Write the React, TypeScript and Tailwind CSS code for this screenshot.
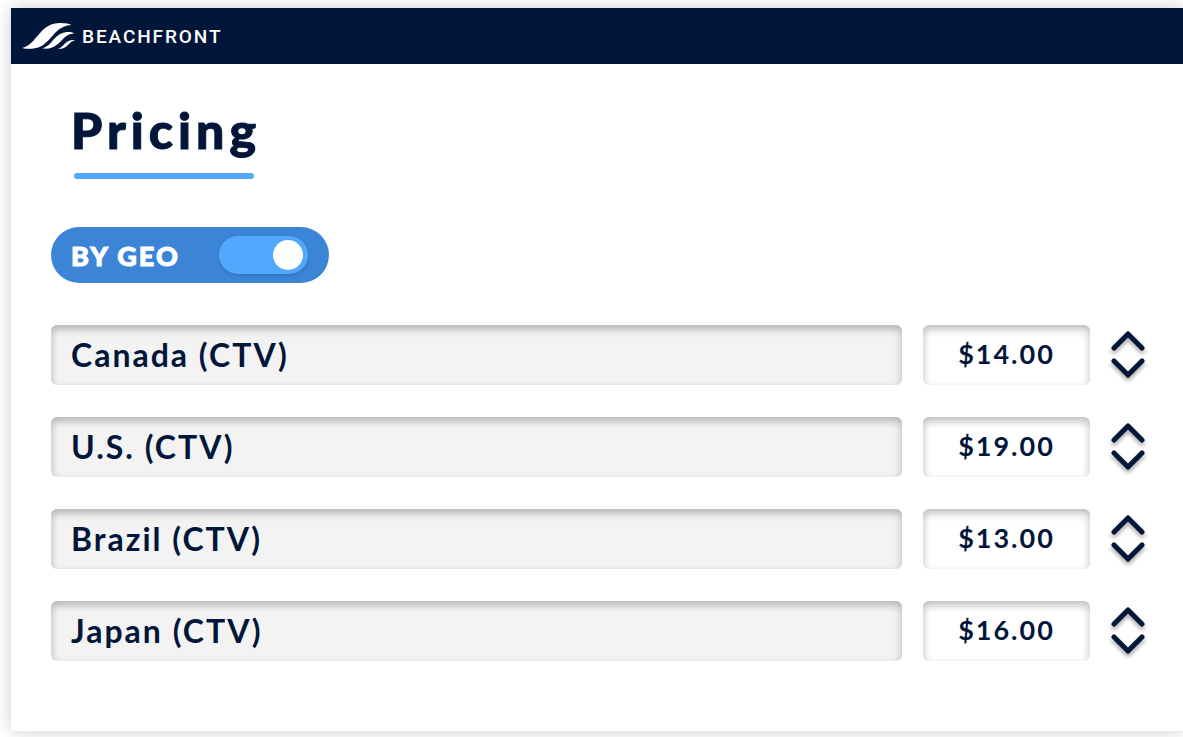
import { useState } from 'react';

const initialRows = [
    { name: 'Canada (CTV)', price: 14 },
    { name: 'U.S. (CTV)', price: 19 },
    { name: 'Brazil (CTV)', price: 13 },
    { name: 'Japan (CTV)', price: 16 },
];

const Logo = () => (
    <svg className="h-7 w-[54px]" viewBox="0 0 54 28" fill="#fff" aria-hidden="true">
        <path d="M0 26C7 24.500 10.500 19.500 15 14.500C21 7.500 26 1.500 37 1C43 0.800 47 1.500 49.500 3C43.500 3.200 38.500 5.500 34 10C28.500 15.500 25 21.500 18 24.800C12.500 27 6 27.500 0 26Z" />
        <path d="M20 26.300C26 25 28.500 21 32 17C36.500 12 42 9.500 48 10C50 10.200 51.500 10.800 52 11.400C47 11.800 44.500 13.500 41.500 16.500C36.500 21.500 30.500 28.500 20 26.300Z" />
        <path d="M36 26.500C39.500 25.800 41 23.500 43 21.500C46 18.500 49.500 17.300 53 18.300C50 19 48.500 20.500 46.500 22.500C43.500 25.500 40.500 27.500 36 26.500Z" />
    </svg>
);

const Chevron = ({ up = false }: { up?: boolean }) => (
    <svg
        className="h-5 w-8 overflow-visible drop-shadow-[0_3px_2px_rgba(0,0,0,0.35)]"
        viewBox="0 0 32 20"
        fill="none"
        stroke="#021639"
        strokeWidth="5"
        strokeLinecap="round"
        strokeLinejoin="round"
        aria-hidden="true"
    >
        <path d={up ? 'M2 16L16 2L30 16' : 'M2 3L16 17L30 3'} />
    </svg>
);

const fieldClass =
    'h-[60px] min-w-0 rounded-md font-bold tracking-[2px] outline-none shadow-[inset_0_4px_8px_rgba(0,0,0,0.27)]';

const App = () => {
    const [byGeo, setByGeo] = useState(true);
    const [rows, setRows] = useState(initialRows);

    const changePrice = (index: number, amount: number) => {
        setRows(rows.map((row, i) => (i === index ? { ...row, price: Math.max(0, row.price + amount) } : row)));
    };

    return (
        <div className="flex min-h-screen bg-white pt-2 pb-1.5 pl-[11px] font-[Lato,sans-serif] text-[#021639]">
            <div className="flex-1 bg-white shadow-[0_0_16px_rgba(0,0,0,0.2)]">
                <header className="flex h-14 items-center gap-1.5 bg-[#021639] pl-[11px] text-white">
                    <Logo />
                    <span className="pt-0.5 font-[Roboto,sans-serif] text-[19px] font-medium tracking-widest">
                        BEACHFRONT
                    </span>
                </header>

                <main className="pt-8 pr-[39px] pb-10 pl-10">
                    <div className="ml-5 w-fit">
                        <h1 className="text-[50px] leading-[68px] font-black tracking-widest [-webkit-text-stroke:1px_#021639]">
                            Pricing
                        </h1>
                        <div className="mt-[9px] ml-[3px] h-1.5 w-[180px] rounded-full bg-[#51a8fd]" />
                    </div>

                    <label className="mt-12 flex h-14 w-[278px] cursor-pointer items-center justify-between rounded-full bg-[#3b84d6] pr-[21px] pl-5">
                        <span className="pt-0.5 text-[27px] font-black tracking-[2px] text-white [-webkit-text-stroke:1px_#fff]">
                            BY GEO
                        </span>
                        <input
                            type="checkbox"
                            role="switch"
                            checked={byGeo}
                            onChange={(e) => setByGeo(e.target.checked)}
                            className="flex h-[38px] w-[89px] cursor-pointer appearance-none items-center rounded-full bg-[#2f6bb0] px-[5px] shadow-[0_2px_4px_rgba(0,0,0,0.12)] before:size-[30px] before:rounded-full before:bg-white before:content-[''] checked:justify-end checked:bg-[#51a8fd]"
                        />
                    </label>

                    <ul className="mt-[42px] flex flex-col gap-8">
                        {rows.map((row, index) => (
                            <li key={row.name} className="flex items-center">
                                <input
                                    type="text"
                                    readOnly
                                    aria-label="Region"
                                    value={row.name}
                                    className={`${fieldClass} flex-1 bg-[#f3f3f3] px-5 pb-0.5 text-[32px]`}
                                />
                                <input
                                    type="text"
                                    readOnly
                                    aria-label={`${row.name} price`}
                                    value={`$${row.price.toFixed(2)}`}
                                    className={`${fieldClass} ml-[21px] w-[167px] bg-white pb-1 text-center text-[27px]`}
                                />
                                <div className="ml-[22px] flex flex-col gap-1.5 pb-px">
                                    <button
                                        type="button"
                                        aria-label={`Raise ${row.name} price`}
                                        onClick={() => changePrice(index, 1)}
                                    >
                                        <Chevron up />
                                    </button>
                                    <button
                                        type="button"
                                        aria-label={`Lower ${row.name} price`}
                                        onClick={() => changePrice(index, -1)}
                                    >
                                        <Chevron />
                                    </button>
                                </div>
                            </li>
                        ))}
                    </ul>
                </main>
            </div>
        </div>
    );
};

export default App;
